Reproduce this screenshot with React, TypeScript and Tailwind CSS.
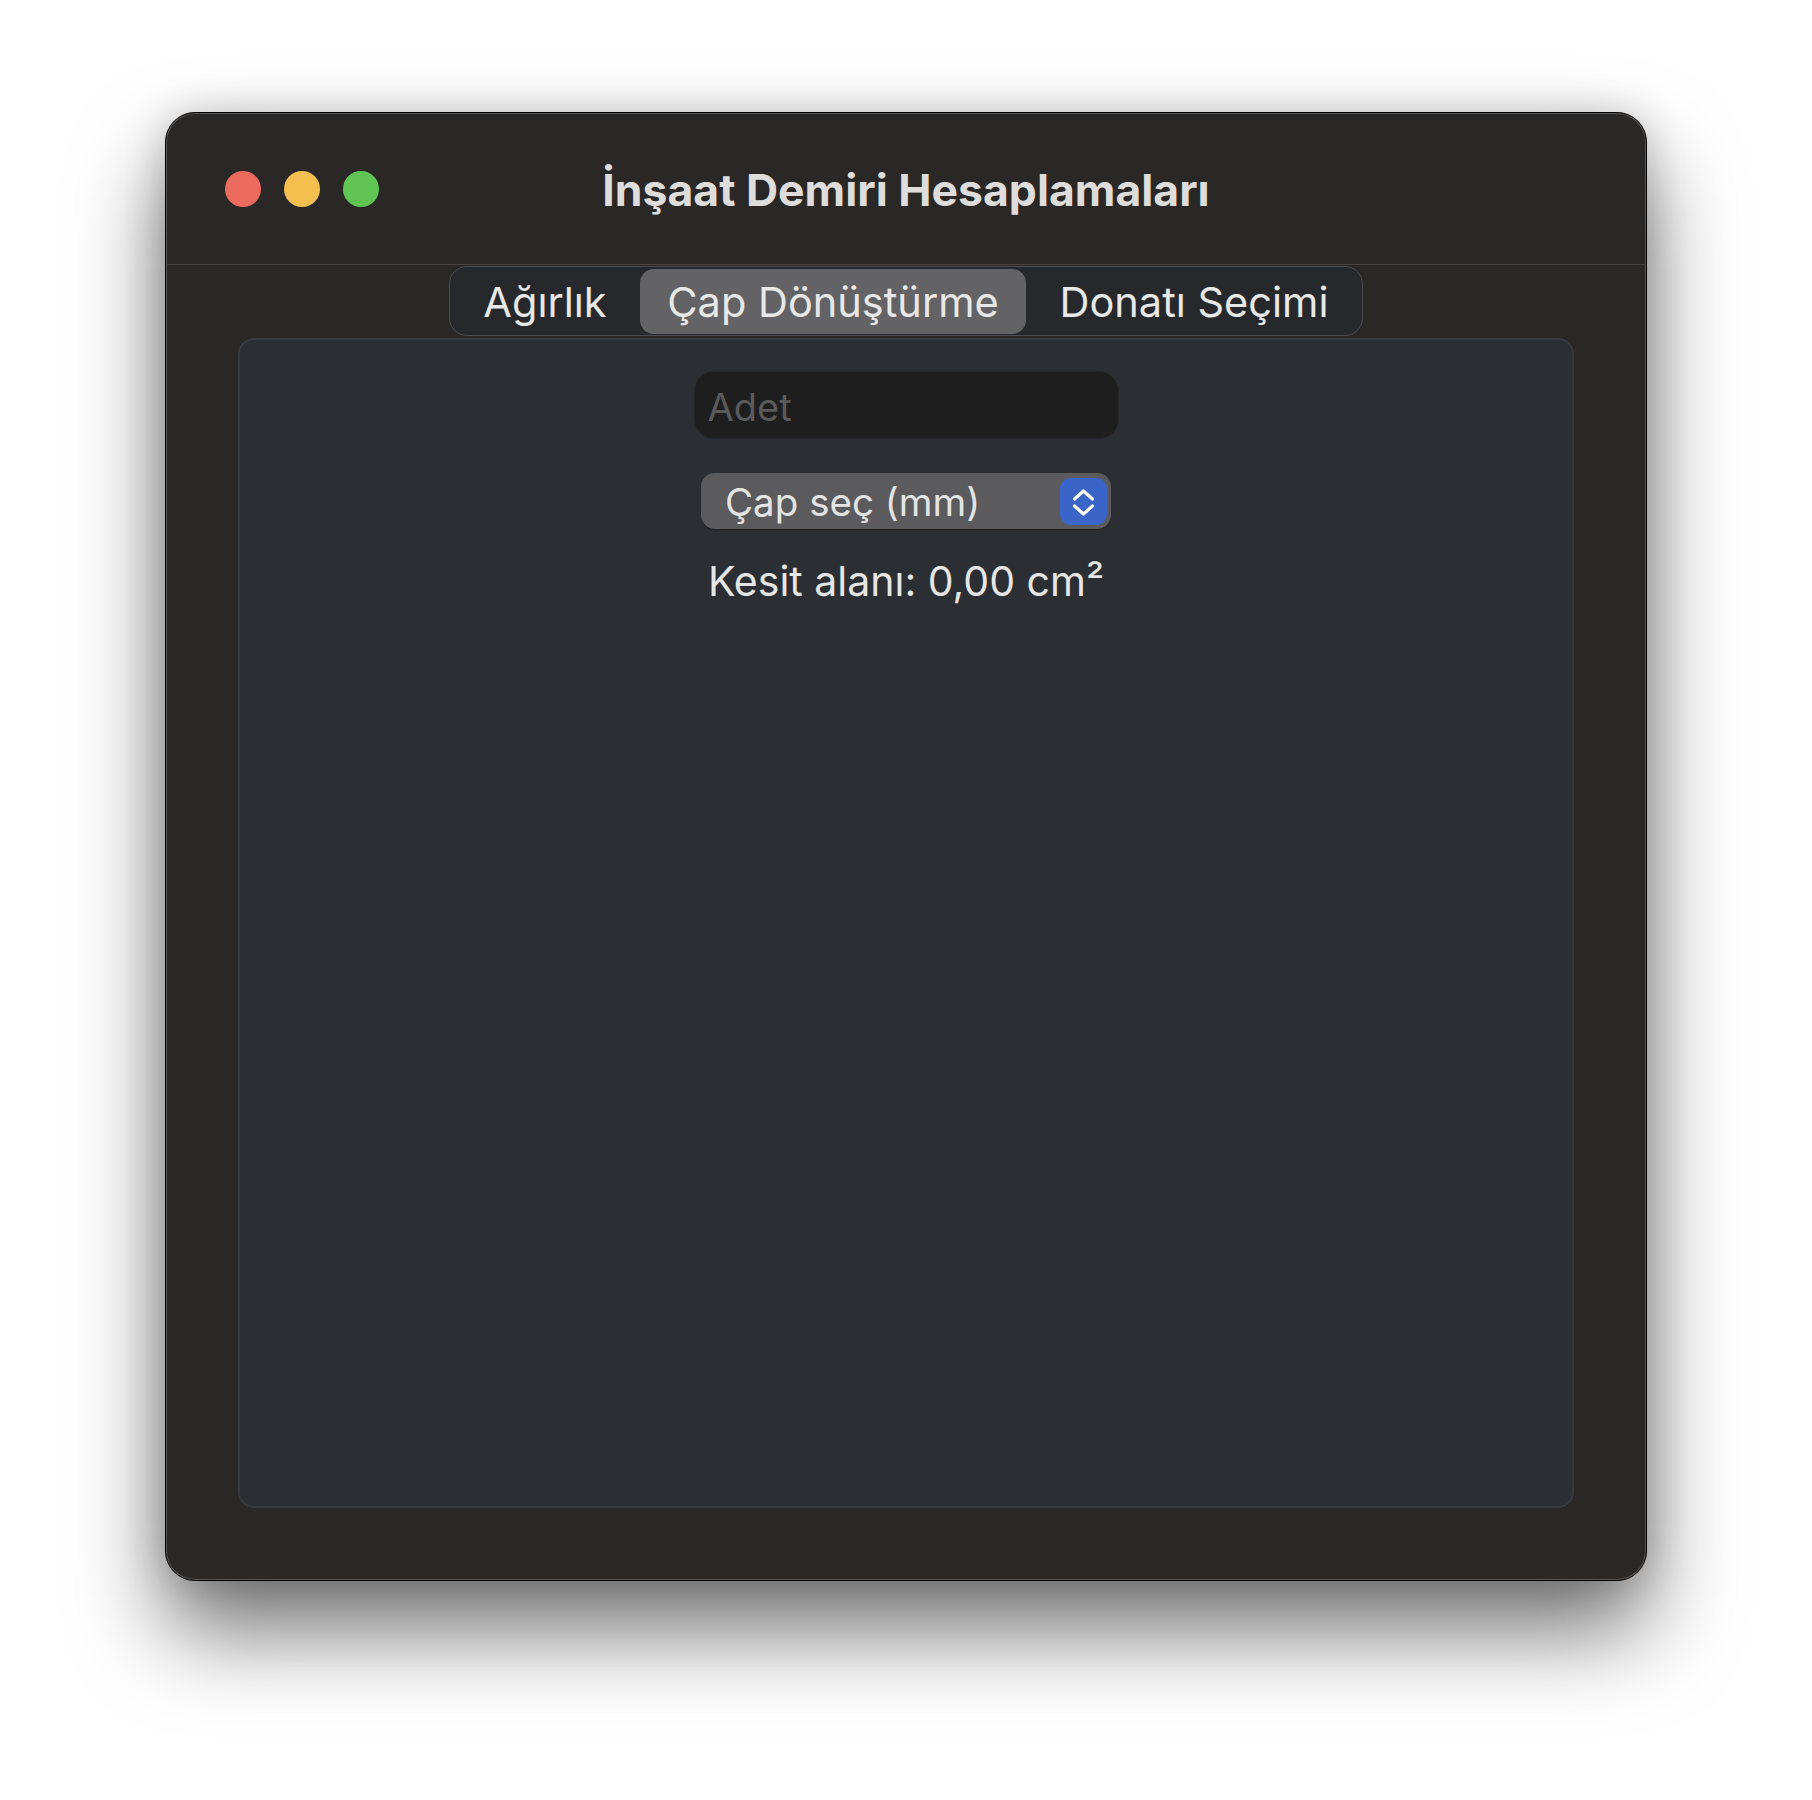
const tabs = [
  { label: "Ağırlık", w: "w-[190px]" },
  { label: "Çap Dönüştürme", w: "w-[386px]" },
  { label: "Donatı Seçimi", w: "w-[336px]" },
];

const StepperIcon = () => (
  <svg width="47" height="47" viewBox="0 0 47 47" fill="none">
    <path
      d="M14.5 21 L23.5 13 L32.5 21"
      stroke="#fff"
      strokeWidth="3.2"
      strokeLinecap="round"
      strokeLinejoin="round"
    />
    <path
      d="M14.5 28 L23.5 36 L32.5 28"
      stroke="#fff"
      strokeWidth="3.2"
      strokeLinecap="round"
      strokeLinejoin="round"
    />
  </svg>
);

const TrafficLights = () => (
  <div className="flex items-center gap-[23px] pl-[59px]">
    <span className="w-[36px] h-[36px] rounded-full bg-[#ed6a5e]"></span>
    <span className="w-[36px] h-[36px] rounded-full bg-[#f4bf4f]"></span>
    <span className="w-[36px] h-[36px] rounded-full bg-[#61c554]"></span>
  </div>
);

const App = () => {
  const active = 1;
  return (
    <div className="min-h-screen bg-white flex justify-center pt-[112px] font-['Inter','Noto_Sans',sans-serif]">
      <div className="w-[1482px] h-[1469px] rounded-[30px] bg-[#2a2826] border border-black shadow-[inset_0_0_0_1px_rgba(255,255,255,0.22),0_50px_90px_rgba(0,0,0,0.55),0_0_40px_rgba(0,0,0,0.18)] flex flex-col">
        {/* title bar */}
        <div className="h-[152px] shrink-0 grid grid-cols-[1fr_auto_1fr] items-center border-b border-[#45423f]">
          <TrafficLights />
          <h1 className="text-[44.5px] leading-[54px] font-bold text-[#dedddc] pt-[3px]">
            İnşaat Demiri Hesaplamaları
          </h1>
          <div></div>
        </div>

        <div className="flex-1 flex flex-col items-center px-[72px] pb-[72px]">
          {/* segmented tabs */}
          <div className="mt-[1px] h-[70px] flex items-center rounded-[18px] border border-[#4a4c51] bg-[#26282c]">
            {tabs.map((t, i) => (
              <div
                key={t.label}
                className={`${t.w} h-[65px] flex items-center justify-center rounded-[14px] text-[41.5px] pt-[3px] text-[#e8e8e8] ${
                  i === active ? "bg-[#636366]" : ""
                }`}
              >
                {t.label}
              </div>
            ))}
          </div>

          {/* panel */}
          <div className="mt-[2px] w-full flex-1 rounded-[16px] border-2 border-[#373a3f] bg-[#2b2e33] flex flex-col items-center pt-[31px]">
            <div className="w-[425px] h-[68px] rounded-[20px] bg-[#1e1e1e] flex items-center pl-[13px] pt-[4px] border border-[#262626]">
              <span className="text-[38px] text-[#5a5a5a]">Adet</span>
            </div>

            <div className="mt-[34px] w-[410px] h-[56px] rounded-[14px] bg-[#5b5b5d] flex items-center justify-between pl-[24px] pr-[4px] shadow-[0_1px_1px_rgba(0,0,0,0.35)]">
              <span className="text-[38.5px] text-[#e4e4e4] pt-[4px]">Çap seç (mm)</span>
              <div className="w-[47px] h-[47px] rounded-[11px] bg-[#3b64c9] flex items-center justify-center">
                <StepperIcon />
              </div>
            </div>

            <p className="mt-[28px] text-[41px] leading-[48px] text-[#e6e6e6]">Kesit alanı: 0,00 cm²</p>
          </div>
        </div>
      </div>
    </div>
  );
};

export default App;
